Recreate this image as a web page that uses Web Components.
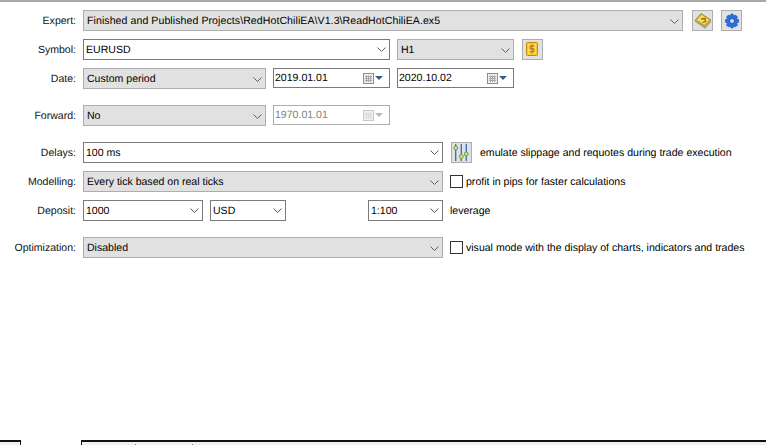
<!DOCTYPE html>
<html>
<head>
<meta charset="utf-8">
<style>
    html, body { margin: 0; height: 100%; background: #fff; }
    body { font: 10.55px "Liberation Sans", Arial, sans-serif; text-rendering: geometricPrecision; color: #000; overflow: hidden; }
</style>
</head>
<body>
<tester-panel>
    <form-row label="Expert:">
        <mt-combo gray width="600" style="letter-spacing:.08px" value="Finished and Published Projects\RedHotChiliEA\V1.3\ReadHotChiliEA.ex5"></mt-combo>
        <icon-button icon="book" style="margin-left:2px"></icon-button>
        <icon-button icon="gear" style="margin-left:1px"></icon-button>
    </form-row>
    <form-row label="Symbol:">
        <mt-combo width="307" value="EURUSD"></mt-combo>
        <mt-combo gray width="117" value="H1"></mt-combo>
        <icon-button icon="coin" style="margin-left:1px"></icon-button>
    </form-row>
    <form-row label="Date:">
        <mt-combo gray width="183" value="Custom period"></mt-combo>
        <date-input value="2019.01.01"></date-input>
        <date-input value="2020.10.02"></date-input>
    </form-row>
    <form-row label="Forward:" spaced>
        <mt-combo gray width="183" value="No"></mt-combo>
        <date-input disabled value="1970.01.01"></date-input>
    </form-row>
    <form-row label="Delays:" spaced>
        <mt-combo width="360" value="100 ms"></mt-combo>
        <icon-button icon="sliders" style="margin-left:1px"></icon-button>
        <span style="margin-left:1px;padding-top:1px">emulate slippage and requotes during trade execution</span>
    </form-row>
    <form-row label="Modelling:">
        <mt-combo gray width="360" value="Every tick based on real ticks"></mt-combo>
        <check-box>profit in pips for faster calculations</check-box>
    </form-row>
    <form-row label="Deposit:">
        <mt-combo width="120" value="1000"></mt-combo>
        <mt-combo width="76" value="USD"></mt-combo>
        <mt-combo width="75" value="1:100" style="margin-left:75px"></mt-combo>
        <span style="padding-top:1px">leverage</span>
    </form-row>
    <form-row label="Optimization:" spaced>
        <mt-combo gray width="360" value="Disabled"></mt-combo>
        <check-box>visual mode with the display of charts, indicators and trades</check-box>
    </form-row>
</tester-panel>
<status-strip></status-strip>

<script>
class TesterPanel extends HTMLElement {
    constructor() {
        super();
        this.attachShadow({ mode: "open" });
        this.shadowRoot.innerHTML = `
            <style>
                :host {
                    display: flex;
                    flex-direction: column;
                    gap: 8px;
                    height: 440px;
                    box-sizing: border-box;
                    padding-top: 8px;
                    border-top: 2px solid #a8a8a8;
                }
            </style>
            <slot></slot>
        `;
    }
}
customElements.define("tester-panel", TesterPanel);

class FormRow extends HTMLElement {
    constructor() {
        super();
        this.attachShadow({ mode: "open" });
        this.shadowRoot.innerHTML = `
            <style>
                :host {
                    display: flex;
                    align-items: center;
                    gap: 7px;
                    height: 21px;
                }
                :host([spaced]) { margin-top: 8px; }
                .label { width: 76px; padding-top: 1px; text-align: right; color: #111; white-space: nowrap; flex: none; }
            </style>
            <span class="label">${this.getAttribute("label") || ""}</span>
            <slot></slot>
        `;
    }
}
customElements.define("form-row", FormRow);

class MtCombo extends HTMLElement {
    constructor() {
        super();
        this.attachShadow({ mode: "open" });
        const w = this.getAttribute("width") || 100;
        this.shadowRoot.innerHTML = `
            <style>
                :host {
                    display: flex;
                    align-items: center;
                    justify-content: space-between;
                    flex: none;
                    box-sizing: border-box;
                    width: ${w}px;
                    height: 21px;
                    padding: 0 3px 0 2px;
                    border: 1px solid #7a7a7a;
                    background: #fff;
                    white-space: nowrap;
                }
                :host([gray]) {
                    padding-left: 3px;
                    padding-top: 1px;
                    border-color: #adadad;
                    background: #e1e1e1;
                }
                svg { flex: none; }
            </style>
            <span>${this.getAttribute("value") || ""}</span>
            <svg width="9" height="5" viewBox="0 0 9 5"><path d="M0.5 0.5 L4.5 4.5 L8.5 0.5" fill="none" stroke="#5c5c5c"/></svg>
        `;
    }
}
customElements.define("mt-combo", MtCombo);

class DateInput extends HTMLElement {
    constructor() {
        super();
        this.attachShadow({ mode: "open" });
        const off = this.hasAttribute("disabled");
        const line = off ? "#c8c8c8" : "#8c8c8c";
        const grid = off ? "#dcdcdc" : "#a8a8a8";
        const arrow = off ? "#b8b8b8" : "#3d5a80";
        this.shadowRoot.innerHTML = `
            <style>
                :host {
                    display: flex;
                    align-items: center;
                    justify-content: space-between;
                    flex: none;
                    box-sizing: border-box;
                    width: 117px;
                    height: 20px;
                    margin-bottom: 1px;
                    padding: 0 6px 0 1px;
                    border: 1px solid #7a7a7a;
                    background: #fff;
                }
                :host([disabled]) { border-color: #adadad; color: #808080; }
                svg { flex: none; }
            </style>
            <span>${this.getAttribute("value") || ""}</span>
            <svg width="20" height="11" viewBox="0 0 20 11">
                <rect x="0.5" y="0.5" width="10" height="10" fill="#eef0f2" stroke="${line}"/>
                <path d="M2 3.5h7M2 5.5h7M2 7.5h7M3.5 2.5v6.5M5.5 2.5v6.5M7.5 2.5v6.5" stroke="${grid}" fill="none"/>
                <path d="M12 3 h8 l-4 4 z" fill="${arrow}"/>
            </svg>
        `;
    }
}
customElements.define("date-input", DateInput);

const ICONS = {
    book: `<path d="M2 9.5 L8 2.5 L18 9 L12 15.5 Z" fill="#d9b02c" stroke="#8f7a2a" stroke-width="0.8"/>
           <path d="M4 9 L8.5 4 L16 9 L11.5 13.5 Z" fill="#f6dd66"/>
           <path d="M2 10 L12 17 L18 10" fill="none" stroke="#a9a88e" stroke-width="1.4"/>
           <path d="M8 8 L12 7.5 L12.5 10.5 L9.5 11.5" fill="none" stroke="#9a6a10" stroke-width="1.3"/>`,
    gear: `<g transform="translate(0.5 1)">
             <path d="M8.5 2 L10.5 2 L11 4 L13 3 L15 5 L14 7 L16 7.5 L16 10.5 L14 11 L15 13 L13 15 L11 14 L10.5 16 L8.5 16 L8 14 L6 15 L4 13 L5 11 L3 10.5 L3 7.5 L5 7 L4 5 L6 3 L8 4 Z" fill="#2a6fe0" stroke="#1d55b5" stroke-width="0.6"/>
             <circle cx="9.5" cy="9" r="2.5" fill="#cfe0f7" stroke="#1d55b5"/>
           </g>`,
    coin: `<rect x="3.5" y="2.5" width="11" height="13" rx="1" fill="#fcc81e" stroke="#c98a06"/>
           <rect x="5" y="4" width="8" height="10" fill="#fddc58"/>
           <path d="M11.5 6 H7 V8.8 H11 V11.8 H6.5 M9 4.3 V13.7" fill="none" stroke="#a86d08"/>`,
    sliders: `<path d="M3.7 1 V18 M9.3 1 V18 M14.3 1 V18" stroke="#2c6fc0" stroke-width="1.3" fill="none"/>
              <circle cx="3.7" cy="5" r="1.9" fill="#d8e48a" stroke="#6d9a3a"/>
              <circle cx="9.3" cy="13.5" r="1.9" fill="#d8e48a" stroke="#6d9a3a"/>
              <circle cx="14.3" cy="11" r="1.9" fill="#d8e48a" stroke="#6d9a3a"/>`
};

class IconButton extends HTMLElement {
    constructor() {
        super();
        this.attachShadow({ mode: "open" });
        this.shadowRoot.innerHTML = `
            <style>
                :host {
                    display: flex;
                    align-items: center;
                    justify-content: center;
                    flex: none;
                    box-sizing: border-box;
                    width: 21px;
                    height: 21px;
                    border: 1px solid #adadad;
                    background: #e1e1e1;
                }
            </style>
            <svg width="19" height="19" viewBox="0 0 19 19">${ICONS[this.getAttribute("icon")] || ""}</svg>
        `;
    }
}
customElements.define("icon-button", IconButton);

class CheckBox extends HTMLElement {
    constructor() {
        super();
        this.attachShadow({ mode: "open" });
        this.shadowRoot.innerHTML = `
            <style>
                :host { display: flex; align-items: center; gap: 3px; white-space: nowrap; }
                .box { flex: none; box-sizing: border-box; width: 13px; height: 13px; border: 1px solid #333; background: #fff; }
                .text { padding-top: 1px; }
            </style>
            <span class="box"></span><span class="text"><slot></slot></span>
        `;
    }
}
customElements.define("check-box", CheckBox);

class StatusStrip extends HTMLElement {
    constructor() {
        super();
        this.attachShadow({ mode: "open" });
        this.shadowRoot.innerHTML = `
            <style>
                :host { display: flex; height: 5px; }
                .left { box-sizing: border-box; width: 21px; border-top: 2px solid #111; border-right: 1px solid #111; background: #f0f0f0; }
                .right { box-sizing: border-box; flex: 1; margin-left: 60px; border-top: 2px solid #111; border-left: 1px solid #111; background: #f0f0f0; position: relative; }
                .right i { position: absolute; bottom: 0; width: 1px; height: 1px; background: #777; }
            </style>
            <div class="left"></div>
            <div class="right"><i style="left:53px"></i><i style="left:110px"></i></div>
        `;
    }
}
customElements.define("status-strip", StatusStrip);
</script>
</body>
</html>
